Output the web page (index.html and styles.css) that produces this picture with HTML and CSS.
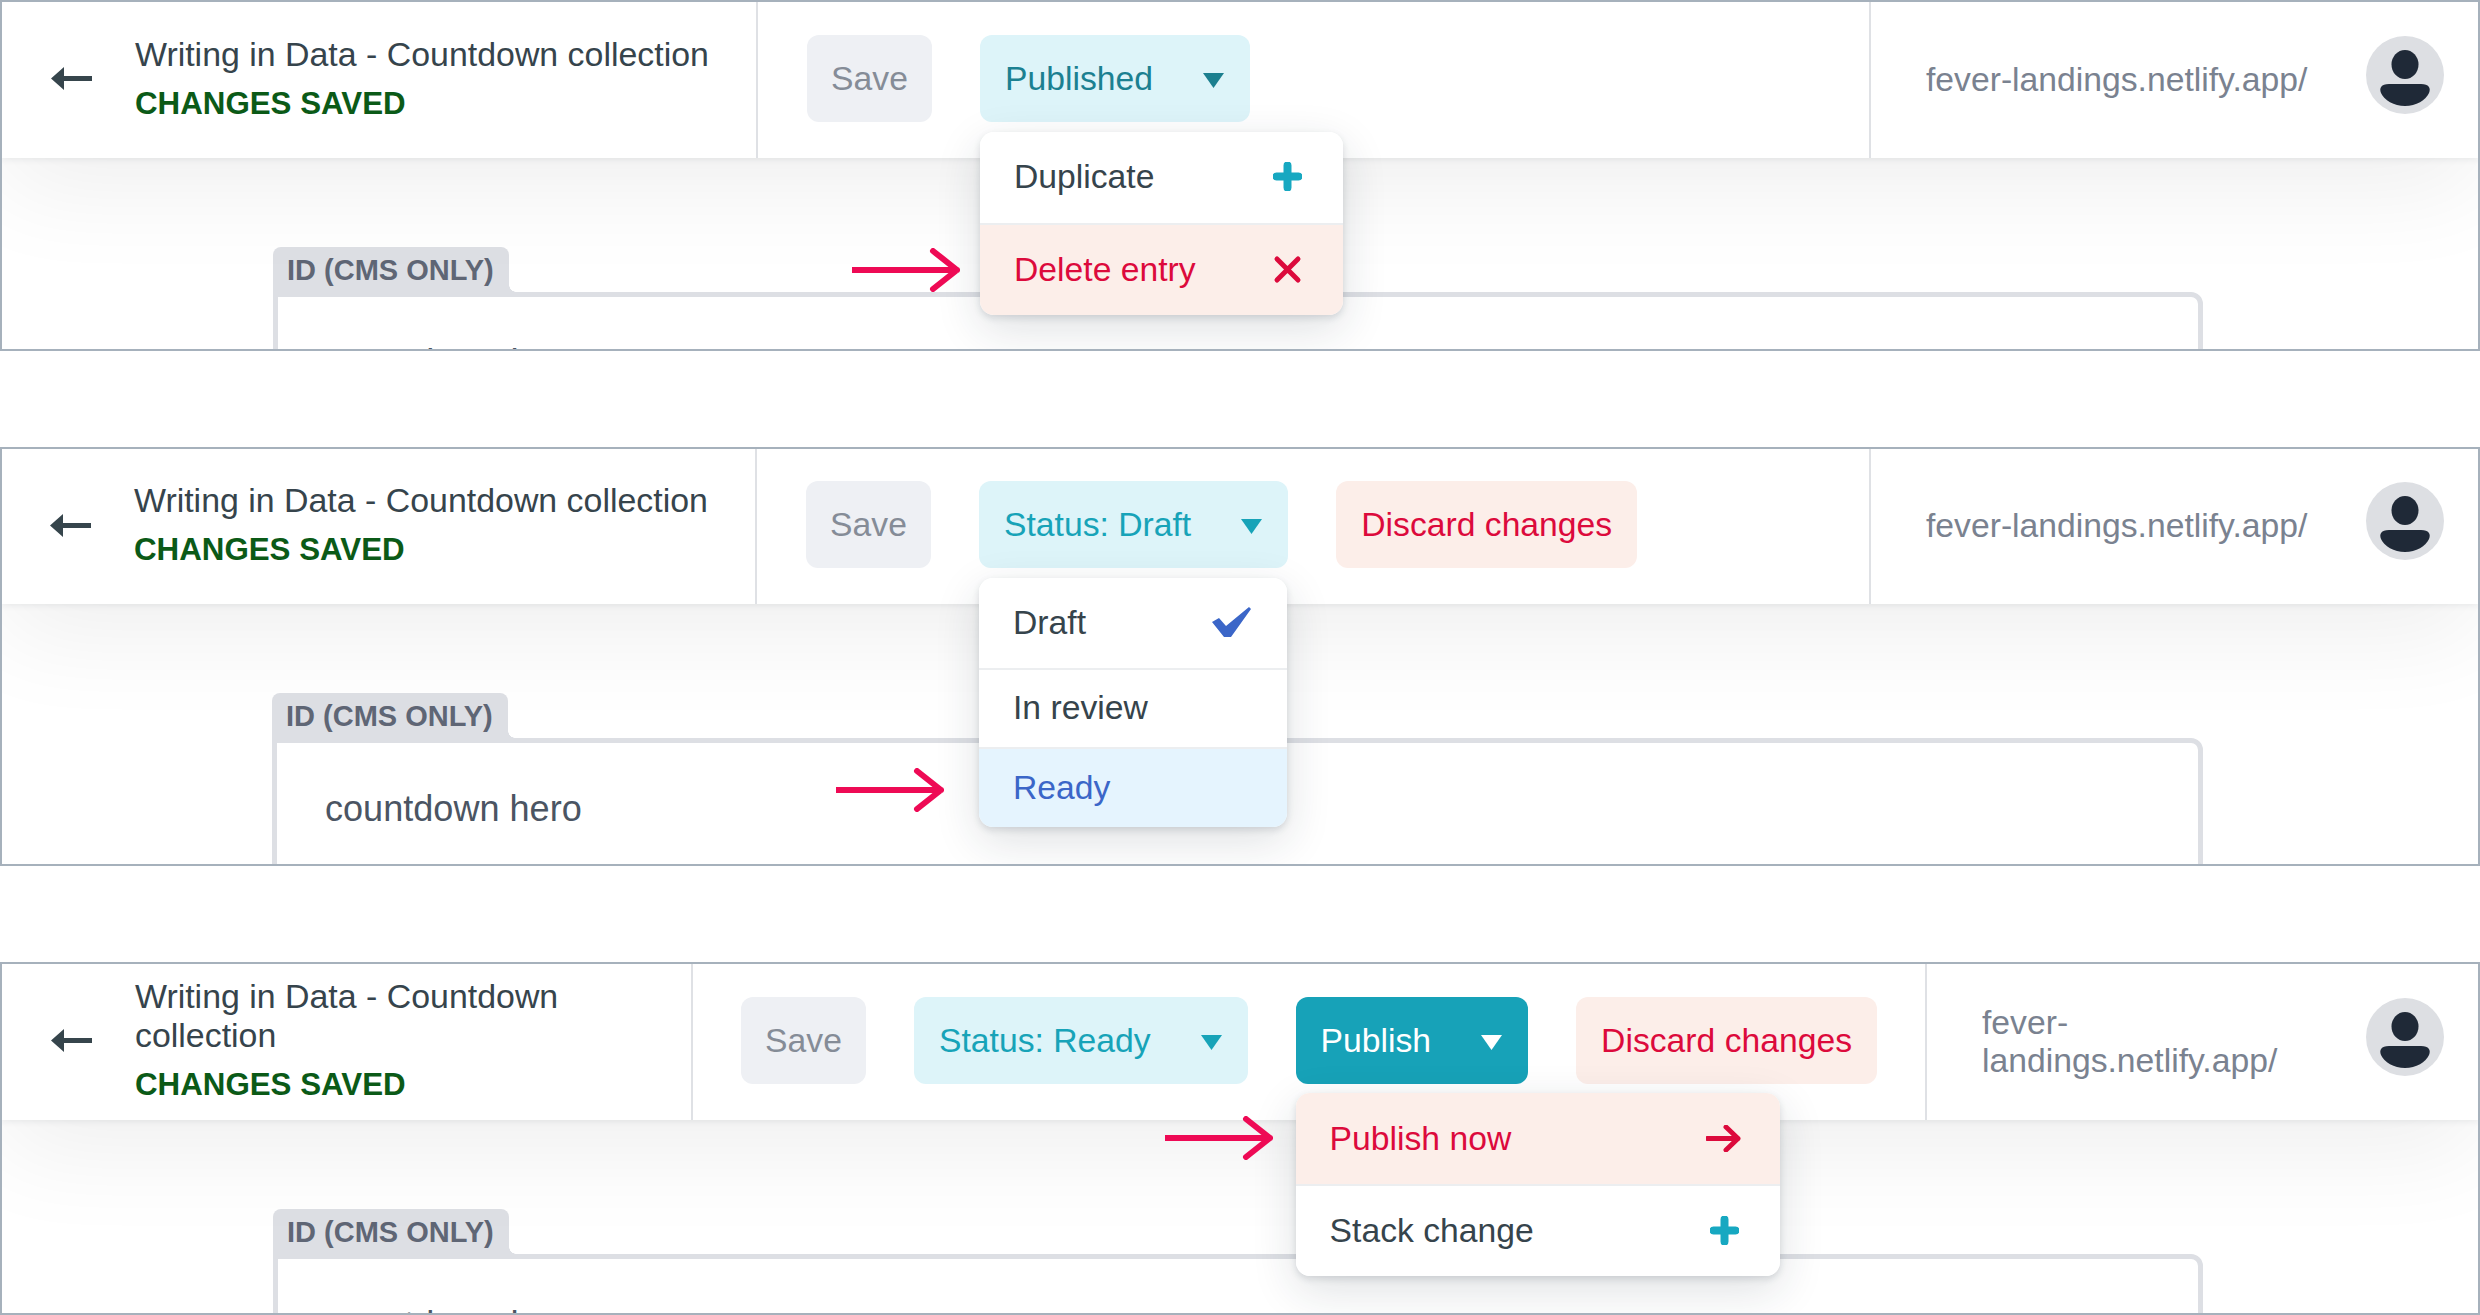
FILE: index.html
```html
<!DOCTYPE html>
<html lang="en">
<head>
<meta charset="utf-8">
<title>Entry header states</title>
<link rel="stylesheet" href="styles.css">
</head>
<body>
<main class="page">

  <section class="panel panel-a">
    <header class="topbar">
      <div class="left">
        <svg class="back" viewBox="0 0 41 23"><path d="M0 11.5 13 0v9h28v5H13v9z"/></svg>
        <div class="titles">
          <div class="title">Writing in Data - Countdown collection</div>
          <div class="saved">CHANGES SAVED</div>
        </div>
      </div>
      <div class="actions">
        <button class="btn btn-save">Save</button>
        <div class="dropdown">
          <button class="btn btn-status btn-published">Published<svg class="caret" viewBox="0 0 21 15"><path d="M0 0h21L10.500 15z"/></svg></button>
          <div class="menu menu-a">
            <div class="item item-tall">Duplicate<svg class="icon" viewBox="0 0 29 29"><path class="plus" d="M14.500 3.500v22M3.500 14.500h22"/></svg></div>
            <div class="item item-tall item-danger">Delete entry<svg class="icon" viewBox="0 0 29 29"><path class="cross" d="M4 4l21 21M25 4 4 25"/></svg></div>
          </div>
          <svg class="pointer pointer-a" viewBox="0 0 108 44"><path d="M0 22h105M81 3l24 19-24 19"/></svg>
        </div>
      </div>
      <div class="right">
        <div class="url">fever-landings.netlify.app/</div>
        <svg class="avatar" viewBox="0 0 78 78"><circle class="avatar-bg" cx="39" cy="39" r="39"/><ellipse class="avatar-fg" cx="39" cy="28.500" rx="13.500" ry="14.500"/><path class="avatar-fg" d="M23 48h32c8 0 10 4 8 9-3 7-13 13-24 13s-21-6-24-13c-2-5 0-9 8-9z"/></svg>
      </div>
    </header>
    <div class="content">
      <div class="tab">ID (CMS ONLY)</div>
      <div class="field">countdown hero</div>
    </div>
  </section>

  <section class="panel panel-b">
    <header class="topbar">
      <div class="left">
        <svg class="back" viewBox="0 0 41 23"><path d="M0 11.5 13 0v9h28v5H13v9z"/></svg>
        <div class="titles">
          <div class="title">Writing in Data - Countdown collection</div>
          <div class="saved">CHANGES SAVED</div>
        </div>
      </div>
      <div class="actions">
        <button class="btn btn-save">Save</button>
        <div class="dropdown">
          <button class="btn btn-status">Status: Draft<svg class="caret" viewBox="0 0 21 15"><path d="M0 0h21L10.500 15z"/></svg></button>
          <div class="menu menu-b">
            <div class="item item-draft">Draft<svg class="icon icon-check" viewBox="0 0 39 30"><path d="M0 15l7-4 7 8L37 0l2 2-20 28h-7z"/></svg></div>
            <div class="item item-review">In review</div>
            <div class="item item-ready">Ready</div>
          </div>
          <svg class="pointer pointer-b" viewBox="0 0 108 44"><path d="M0 22h105M81 3l24 19-24 19"/></svg>
        </div>
        <button class="btn btn-discard">Discard changes</button>
      </div>
      <div class="right">
        <div class="url">fever-landings.netlify.app/</div>
        <svg class="avatar" viewBox="0 0 78 78"><circle class="avatar-bg" cx="39" cy="39" r="39"/><ellipse class="avatar-fg" cx="39" cy="28.500" rx="13.500" ry="14.500"/><path class="avatar-fg" d="M23 48h32c8 0 10 4 8 9-3 7-13 13-24 13s-21-6-24-13c-2-5 0-9 8-9z"/></svg>
      </div>
    </header>
    <div class="content">
      <div class="tab">ID (CMS ONLY)</div>
      <div class="field">countdown hero</div>
    </div>
  </section>

  <section class="panel panel-c">
    <header class="topbar">
      <div class="left">
        <svg class="back" viewBox="0 0 41 23"><path d="M0 11.5 13 0v9h28v5H13v9z"/></svg>
        <div class="titles">
          <div class="title">Writing in Data - Countdown collection</div>
          <div class="saved">CHANGES SAVED</div>
        </div>
      </div>
      <div class="actions">
        <button class="btn btn-save">Save</button>
        <button class="btn btn-status">Status: Ready<svg class="caret" viewBox="0 0 21 15"><path d="M0 0h21L10.500 15z"/></svg></button>
        <div class="dropdown">
          <button class="btn btn-publish">Publish<svg class="caret" viewBox="0 0 21 15"><path d="M0 0h21L10.500 15z"/></svg></button>
          <div class="menu menu-c">
            <div class="item item-tall item-danger">Publish now<svg class="icon icon-go" viewBox="0 0 35 27"><path d="M1 13.500h31M20 2l12 11.500L20 25"/></svg></div>
            <div class="item item-tall">Stack change<svg class="icon" viewBox="0 0 29 29"><path class="plus" d="M14.500 3.500v22M3.500 14.500h22"/></svg></div>
          </div>
          <svg class="pointer pointer-c" viewBox="0 0 108 44"><path d="M0 22h105M81 3l24 19-24 19"/></svg>
        </div>
        <button class="btn btn-discard">Discard changes</button>
      </div>
      <div class="right">
        <div class="url">fever-landings.netlify.app/</div>
        <svg class="avatar" viewBox="0 0 78 78"><circle class="avatar-bg" cx="39" cy="39" r="39"/><ellipse class="avatar-fg" cx="39" cy="28.500" rx="13.500" ry="14.500"/><path class="avatar-fg" d="M23 48h32c8 0 10 4 8 9-3 7-13 13-24 13s-21-6-24-13c-2-5 0-9 8-9z"/></svg>
      </div>
    </header>
    <div class="content">
      <div class="tab">ID (CMS ONLY)</div>
      <div class="field">countdown hero</div>
    </div>
  </section>

</main>
</body>
</html>
```
FILE: styles.css
```css
* { box-sizing: border-box; }

html, body {
  margin: 0;
  background: #fff;
}

body {
  font-family: "Liberation Sans", Arial, sans-serif;
  font-size: 33.7px;
  color: #36444c;
}

.page {
  display: flex;
  flex-direction: column;
  gap: 96px;
  width: 2480px;
}

.panel {
  border: 2px solid #a6b1bc;
  overflow: hidden;
  background: #fff;
}
.panel-a { height: 351px; }
.panel-b { height: 419px; }
.panel-c { height: 353px; }

.topbar {
  position: relative;
  z-index: 1;
  display: flex;
  height: 156px;
  background: #fff;
  box-shadow: 0 2px 6px rgba(31, 41, 55, .07), 0 30px 100px rgba(0, 0, 0, .065);
}
.panel-b .topbar { height: 155px; }

.left {
  flex: none;
  display: flex;
  align-items: center;
  width: 756px;
  padding: 0 0 3px 49px;
  border-right: 2px solid #dfe1e5;
}
.panel-b .left { width: 755px; padding-left: 48px; }
.panel-c .left { width: 691px; }

.back {
  flex: none;
  width: 41px;
  height: 23px;
  margin-right: 43px;
  fill: #36454c;
}

.title {
  font-size: 33.900px;
  line-height: 39px;
}

.saved {
  margin-top: 10px;
  line-height: 39px;
  font-size: 31.300px;
  font-weight: 700;
  color: #0b5a17;
}

.actions {
  flex: 1;
  display: flex;
  align-items: center;
  gap: 48px;
  padding: 0 0 3px 49px;
}
.panel-b .actions { padding-bottom: 4px; }
.panel-c .actions { padding-left: 48px; }

.btn {
  display: flex;
  align-items: center;
  height: 87px;
  padding: 0 25px;
  border: 0;
  border-radius: 12px;
  font: inherit;
  white-space: nowrap;
}

.btn-save {
  justify-content: center;
  width: 125px;
  padding: 0;
  background: #eef0f4;
  color: #858c97;
}
.btn-status { background: #ddf4f9; color: #17a3b8; fill: #17a3b8; }
.btn-published { color: #1b8091; fill: #1b7f8f; }
.btn-publish { background: #17a2b8; color: #fff; fill: #fff; }
.btn-discard { background: #fceee9; color: #dc0a3c; }

.caret {
  flex: none;
  width: 21px;
  height: 15px;
  margin: 3px 1px 0 50px;
}

.dropdown { position: relative; }

.menu {
  position: absolute;
  z-index: 2;
  top: 97px;
  left: 0;
  overflow: hidden;
  background: #fff;
  border-radius: 14px;
  box-shadow: 0 3px 7px rgba(31, 41, 55, .14), 0 14px 46px rgba(31, 41, 55, .14);
}
.menu-a { width: 363px; }
.menu-b { width: 308px; }
.menu-c { width: 484px; top: 96px; }

.item {
  display: flex;
  align-items: center;
  justify-content: space-between;
  padding: 0 41px 2px 34px;
  white-space: nowrap;
  background: #fff;
}
.menu-c .item { padding-bottom: 1px; }
.item + .item { border-top: 2px solid #eceef0; }
.item-tall { height: 91px; }
.item-tall + .item-tall { height: 92px; }
.item-draft { height: 90px; }
.item-review { height: 79px; }
.item-ready { height: 80px; background: #e5f4fe; color: #3b66c8; }
.item-danger { background: #fceee9; color: #dc0a3c; }

.icon {
  flex: none;
  width: 29px;
  height: 29px;
}
.plus {
  fill: none;
  stroke: #17a8c1;
  stroke-width: 8;
  stroke-linecap: round;
}
.cross {
  fill: none;
  stroke: #dc0a3c;
  stroke-width: 5;
  stroke-linecap: round;
}
.icon-check {
  width: 39px;
  height: 30px;
  margin-right: -5px;
  fill: #3b66c8;
}
.icon-go {
  width: 35px;
  height: 27px;
  margin-right: -2px;
  fill: none;
  stroke: #dc0a3c;
  stroke-width: 5;
  stroke-linecap: round;
  stroke-linejoin: round;
}

.pointer {
  position: absolute;
  z-index: 3;
  width: 108px;
  height: 44px;
  fill: none;
  stroke: #ee0a55;
  stroke-width: 6;
  stroke-linecap: round;
  stroke-linejoin: round;
}
.pointer-a { left: -128px; top: 213px; }
.pointer-b { left: -143px; top: 287px; }
.pointer-c { left: -131px; top: 119px; }

.right {
  flex: none;
  display: flex;
  align-items: center;
  justify-content: space-between;
  width: 609px;
  padding: 0 34px 3px 55px;
  border-left: 2px solid #dfe1e5;
  color: #7a8290;
}
.panel-b .right { padding-bottom: 4px; }
.panel-c .right { width: 553px; }

.url { width: 300px; line-height: 38px; }
.panel-a .url, .panel-b .url { white-space: nowrap; }

.avatar {
  flex: none;
  width: 78px;
  height: 78px;
  margin-bottom: 8px;
}
.avatar-bg { fill: #dddfe3; }
.avatar-fg { fill: #1f2937; }

.content { padding: 89px 275px 0 271px; }
.panel-b .content { padding-left: 270px; }

.tab {
  position: relative;
  width: 236px;
  height: 45px;
  padding: 3px 0 0 14px;
  font-size: 29px;
  font-weight: 700;
  line-height: 40px;
  color: #5f6675;
  background: #dddfe4;
  border-radius: 8px 8px 0 0;
}
.tab::after {
  content: "";
  position: absolute;
  left: 100%;
  bottom: 0;
  width: 7px;
  height: 7px;
  background: radial-gradient(circle at 100% 0, transparent 6.500px, #dddfe4 7px);
}

.field {
  height: 200px;
  padding: 44px 0 0 48px;
  font-size: 36.100px;
  line-height: 44px;
  color: #4b5563;
  background: #fff;
  border: 5px solid #dddfe4;
  border-radius: 0 12px 0 0;
}
```
